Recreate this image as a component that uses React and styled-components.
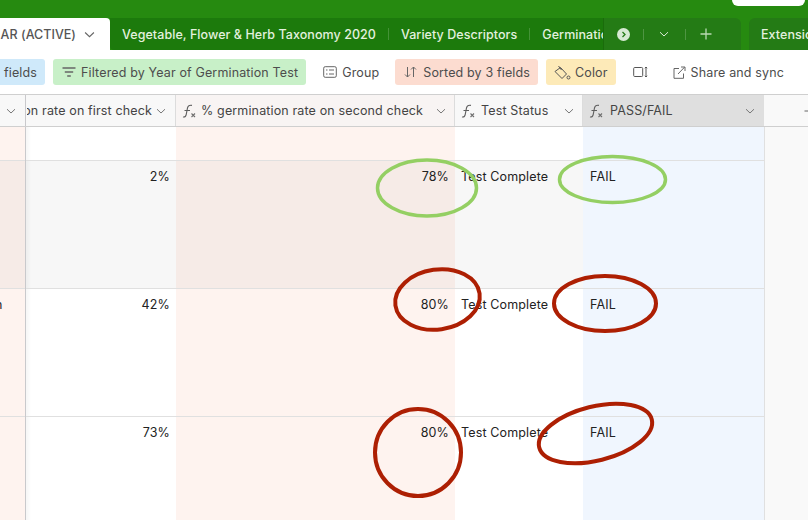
import React from "react";
import styled, { createGlobalStyle } from "styled-components";

const Global = createGlobalStyle`
  html, body { margin: 0; padding: 0; background: #fff; }
  body { width: 808px; height: 520px; overflow: hidden; font-family: Inter, "Liberation Sans", sans-serif; }
  #root { width: 808px; height: 520px; }
`;

const Page = styled.div`
  position: relative;
  width: 808px;
  height: 520px;
  overflow: hidden;
  display: flex;
  flex-direction: column;
  background: #fff;
`;

/* ---------- green header ---------- */
const Header = styled.div`
  height: 50px;
  flex: none;
  background: #268a10;
  display: flex;
  flex-direction: column;
  position: relative;
`;
const TopBar = styled.div`
  height: 18px;
  flex: none;
  display: flex;
  justify-content: flex-end;
  padding-right: 3px;
`;
const TopPill = styled.div`
  width: 73px;
  height: 6px;
  background: #fff;
  border-radius: 0 0 12px 12px;
`;
const TabRow = styled.div`
  height: 32px;
  display: flex;
  align-items: stretch;
  overflow: hidden;
`;
const ActiveTab = styled.div`
  width: 110px;
  flex: none;
  background: #fff;
  border-radius: 0 4px 0 0;
  display: flex;
  align-items: center;
  justify-content: flex-end;
  gap: 8px;
  padding-right: 15px;
  box-sizing: border-box;
  font-size: 12.5px;
  font-weight: 500;
  letter-spacing: 0.03px;
  color: #555;
  white-space: nowrap;
`;
const TabStrip = styled.div`
  width: 493px;
  flex: none;
  background: #1c7a0c;
  border-radius: 0 0 0 4px;
  display: flex;
  align-items: center;
  overflow: hidden;
  padding-left: 12px;
  box-sizing: border-box;
`;
const TabLabel = styled.span`
  font-size: 12.5px;
  font-weight: 500;
  letter-spacing: 0.06px;
  color: #e3f1df;
  white-space: nowrap;
  flex: none;
`;
const TabSep = styled.span`
  width: 1px;
  height: 12px;
  margin: 0 12px;
  flex: none;
  background: rgba(255, 255, 255, 0.18);
`;
const TabControls = styled.div`
  width: 138px;
  flex: none;
  background: #247b15;
  border-left: 1px solid #1a6c0b;
  border-radius: 0 6px 0 0;
  box-sizing: border-box;
  display: flex;
  align-items: center;
  color: #dcecd8;
  padding-left: 13px;
`;
const ControlDot = styled.span`
  width: 13px;
  height: 13px;
  border-radius: 50%;
  background: #d7ead3;
  display: flex;
  align-items: center;
  justify-content: center;
  flex: none;
`;
const ControlSep = styled.span`
  width: 1px;
  height: 11px;
  flex: none;
  margin: 0 ${(p) => p.$r}px 0 ${(p) => p.$l}px;
  background: rgba(255, 255, 255, 0.2);
`;
const ExtTab = styled.div`
  flex: 1;
  margin-left: 8px;
  background: #247b15;
  border-radius: 6px 0 0 0;
  padding-left: 12px;
  display: flex;
  align-items: center;
  overflow: hidden;
`;

/* ---------- toolbar ---------- */
const Toolbar = styled.div`
  height: 44px;
  flex: none;
  display: flex;
  align-items: center;
  box-sizing: border-box;
`;
const Tool = styled.div`
  height: 26px;
  box-sizing: border-box;
  display: flex;
  align-items: center;
  flex: none;
  gap: ${(p) => p.$gap ?? 5}px;
  margin-right: ${(p) => p.$mr ?? 8}px;
  padding: 0 ${(p) => p.$pr ?? 8}px 0 ${(p) => p.$pl ?? 8}px;
  border-radius: ${(p) => (p.$flushLeft ? "0 3px 3px 0" : "3px")};
  background: ${(p) => p.$bg || "transparent"};
  font-size: 12.5px;
  letter-spacing: 0.14px;
  color: #4d4d4d;
  white-space: nowrap;
`;

/* ---------- grid ---------- */
const Grid = styled.div`
  flex: 1;
  display: flex;
  flex-direction: column;
  min-height: 0;
`;
const Columns = "25px 1px 150px 279px 128px 181px 44px";
const HeadRow = styled.div`
  display: grid;
  grid-template-columns: ${Columns};
  height: 33px;
  flex: none;
  box-sizing: border-box;
  border-top: 1px solid #cfcfcf;
  border-bottom: 1px solid #cfcfcf;
`;
const Row = styled.div`
  display: grid;
  grid-template-columns: ${Columns};
  height: ${(p) => p.$h}px;
  flex: none;
`;
const HeadCell = styled.div`
  display: flex;
  align-items: center;
  box-sizing: border-box;
  min-width: 0;
  overflow: hidden;
  background: ${(p) => p.$bg || "#f8f8f8"};
  border-right: ${(p) => (p.$nb ? "0" : "1px solid #dcdcdc")};
  padding: 0 ${(p) => p.$pr ?? 8}px 0 ${(p) => p.$pl ?? 6}px;
  font-size: 12.5px;
  letter-spacing: 0.14px;
  color: #444;
  white-space: nowrap;
`;
const HeadText = styled.span`
  flex: 1;
  margin-left: ${(p) => p.$ml ?? 0}px;
  min-width: 0;
  white-space: nowrap;
  overflow: hidden;
  direction: ${(p) => (p.$clipStart ? "rtl" : "ltr")};
`;
const Divider = styled.div`
  background: #c9c9cc;
`;
const Cell = styled.div`
  background: ${(p) => p.$bg};
  box-sizing: border-box;
  min-width: 0;
  padding: 8px 6px 0 ${(p) => p.$pl ?? 6}px;
  font-size: 12.5px;
  letter-spacing: 0.14px;
  line-height: 16px;
  color: #222;
  text-align: ${(p) => (p.$right ? "right" : "left")};
  white-space: nowrap;
  overflow: hidden;
  border-bottom: ${(p) => (p.$line ? "1px solid #e0e0e0" : "0")};
  box-shadow: ${(p) => (p.$shade ? "inset 5px 0 3px -2px rgba(0,0,0,0.035)" : "none")};
`;
const LeadCell = styled(Cell)`
  padding-left: 0;
  padding-right: 0;
  text-indent: -5px;
`;
const EmptyCell = styled.div`
  background: #f9f9f9;
  border-left: 1px solid #e0e0e0;
`;
const Overlay = styled.svg`
  position: absolute;
  left: 0;
  top: 0;
  pointer-events: none;
`;

const Chevron = ({ size = 10, color = "#777" }) => (
  <svg width={size} height={size} viewBox="0 0 10 10" fill="none" style={{ flex: "none" }}>
    <path d="M1 3.200 5 7l4-3.800" stroke={color} strokeWidth="1" />
  </svg>
);

const Fx = () => (
  <svg width="14" height="15" viewBox="0 0 14 15" fill="none" style={{ flex: "none" }}>
    <path d="M1 14c2.200.4 2.800-.5 3.200-2.400l1.300-6.800C5.900 3 7.200 2 10 2.400M2.500 7.500h5.500" stroke="#5f5f5f" strokeWidth="1.100" />
    <path d="M9.500 10.500l3.500 3.500M13 10.500l-3.500 3.500" stroke="#6f6f6f" strokeWidth="1.100" />
  </svg>
);

const FilterIcon = () => (
  <svg width="14" height="12" viewBox="0 0 14 12" fill="none" style={{ flex: "none" }}>
    <path d="M0.500 2h13M2.800 6h8.400M5.200 10h3.600" stroke="#666" strokeWidth="1.300" />
  </svg>
);
const GroupIcon = () => (
  <svg width="14" height="12" viewBox="0 0 14 12" fill="none" style={{ flex: "none" }}>
    <rect x="0.700" y="0.700" width="12.600" height="10.600" rx="1.500" stroke="#666" />
    <path d="M3 4h1.500M6 4h5M3 8h1.500M6 8h5" stroke="#666" />
  </svg>
);
const SortIcon = () => (
  <svg width="13" height="12" viewBox="0 0 13 12" fill="none" style={{ flex: "none" }}>
    <path d="M3.500 1v10M1 8.500 3.500 11 6 8.500M9.500 11V1M7 3.500 9.500 1 12 3.500" stroke="#666" />
  </svg>
);
const BucketIcon = () => (
  <svg width="17" height="15" viewBox="0 0 17 15" fill="none" style={{ flex: "none" }}>
    <path d="M1 6.500 6.500 2.500 12.500 9l-4.500 4.500z" stroke="#555" />
    <path d="M4.500 1 7.500 5" stroke="#555" />
    <circle cx="14.500" cy="12.500" r="1.500" stroke="#555" />
  </svg>
);
const RowHeightIcon = () => (
  <svg width="15" height="12" viewBox="0 0 15 12" fill="none" style={{ flex: "none" }}>
    <rect x="0.700" y="1.500" width="9" height="9" rx="1" stroke="#555" />
    <path d="M13 1v10M11.800 2.200 13 1l1.200 1.200M11.800 9.800 13 11l1.200-1.200" stroke="#555" />
  </svg>
);
const ShareIcon = () => (
  <svg width="13" height="13" viewBox="0 0 13 13" fill="none" style={{ flex: "none" }}>
    <path d="M6 2.500H1v9.800h9.500V7.500" stroke="#666" />
    <path d="M5 8l6.500-6.800M8 1h4v4" stroke="#666" />
  </svg>
);

const rowColors = {
  plain: ["#fef3ef", "#ffffff", "#fef3ef", "#ffffff", "#f0f6fe"],
  hover: ["#f6ebe7", "#f7f7f7", "#f6ebe7", "#f7f7f7", "#f0f6fe"],
};

const rows = [
  { h: 34, kind: "plain", line: true },
  { h: 128, kind: "hover", line: true, first: "2%", second: "78%", status: "Test Complete", result: "FAIL" },
  { h: 128, kind: "plain", line: true, lead: "n", first: "42%", second: "80%", status: "Test Complete", result: "FAIL" },
  { h: 104, kind: "plain", first: "73%", second: "80%", status: "Test Complete", result: "FAIL" },
];

const GridRow = ({ r }) => {
  const c = rowColors[r.kind];
  return (
    <Row $h={r.h}>
      <LeadCell $bg={c[0]} $line={r.line}>{r.lead}</LeadCell>
      <Divider />
      <Cell $bg={c[1]} $right $shade $line={r.line}>{r.first}</Cell>
      <Cell $bg={c[2]} $right $line={r.line}>{r.second}</Cell>
      <Cell $bg={c[3]} $line={r.line}>{r.status}</Cell>
      <Cell $bg={c[4]} $pl={7} $line={r.line}>{r.result}</Cell>
      <EmptyCell />
    </Row>
  );
};

export default function App() {
  return (
    <Page>
      <Global />
      <Header>
        <TopBar><TopPill /></TopBar>
        <TabRow>
          <ActiveTab>
            <span>AR (ACTIVE)</span>
            <Chevron size={11} color="#666" />
          </ActiveTab>
          <TabStrip>
            <TabLabel>Vegetable, Flower &amp; Herb Taxonomy 2020</TabLabel>
            <TabSep />
            <TabLabel>Variety Descriptors</TabLabel>
            <TabSep />
            <TabLabel>Germination</TabLabel>
          </TabStrip>
          <TabControls>
            <ControlDot>
              <svg width="7" height="7" viewBox="0 0 7 7" fill="none"><path d="M2.500 1 5 3.500 2.500 6" stroke="#247b15" strokeWidth="1.300" /></svg>
            </ControlDot>
            <ControlSep $l={13} $r={15} />
            <Chevron size={10} color="#dcecd8" />
            <ControlSep $l={16} $r={14} />
            <svg width="12" height="12" viewBox="0 0 12 12" fill="none"><path d="M6 .500v11M.500 6h11" stroke="#b9d9b3" strokeWidth="1.300" /></svg>
          </TabControls>
          <ExtTab><TabLabel>Extensions</TabLabel></ExtTab>
        </TabRow>
      </Header>

      <Toolbar>
        <Tool $bg="#cfe9fa" $flushLeft $mr={8} $pl={4} $pr={8}><span>fields</span></Tool>
        <Tool $bg="#c8f0c8" $mr={9} $pl={9} $pr={8}><FilterIcon /><span>Filtered by Year of Germination Test</span></Tool>
        <Tool $mr={8} $pl={8} $pr={8}><GroupIcon /><span>Group</span></Tool>
        <Tool $bg="#fcdcd0" $mr={8} $pl={9} $pr={8} $gap={6}><SortIcon /><span>Sorted by 3 fields</span></Tool>
        <Tool $bg="#fdeab8" $mr={9} $pl={8} $pr={8} $gap={4}><BucketIcon /><span>Color</span></Tool>
        <Tool $mr={9} $pl={8} $pr={8}><RowHeightIcon /></Tool>
        <Tool $pl={8} $gap={5}><ShareIcon /><span>Share and sync</span></Tool>
      </Toolbar>

      <Grid>
        <HeadRow>
          <HeadCell $nb $pr={0} $pl={6}><Chevron /></HeadCell>
          <Divider />
          <HeadCell $pl={0} $pr={9}>
            <HeadText $clipStart $ml={1}>on rate on first check</HeadText>
            <span style={{ width: 4 }} />
            <Chevron />
          </HeadCell>
          <HeadCell $bg="#f8f4f3">
            <Fx />
            <HeadText $ml={5}>% germination rate on second check</HeadText>
            <Chevron />
          </HeadCell>
          <HeadCell>
            <Fx />
            <HeadText $ml={6}>Test Status</HeadText>
            <Chevron />
          </HeadCell>
          <HeadCell $bg="#dfdfdf" $nb $pr={9}>
            <Fx />
            <HeadText $ml={7}>PASS/FAIL</HeadText>
            <Chevron />
          </HeadCell>
          <HeadCell $bg="#f9f9f9" $nb $pl={40} $pr={0}>
            <svg width="12" height="12" viewBox="0 0 12 12" fill="none" style={{ flex: "none" }}><path d="M6 .500v11M.500 6h11" stroke="#666" /></svg>
          </HeadCell>
        </HeadRow>
        {rows.map((r, i) => <GridRow key={i} r={r} />)}
      </Grid>

      <Overlay width="808" height="520" viewBox="0 0 808 520" fill="none">
        <ellipse cx="427" cy="188" rx="49.500" ry="28" stroke="#94cf63" strokeWidth="3.500" />
        <ellipse cx="612.500" cy="179.500" rx="53" ry="23" stroke="#94cf63" strokeWidth="3.500" />
        <ellipse cx="437.500" cy="299.500" rx="42.500" ry="30" stroke="#ad1f03" strokeWidth="4" transform="rotate(-8 437.500 299.500)" />
        <ellipse cx="605" cy="303.500" rx="51" ry="27.500" stroke="#ad1f03" strokeWidth="4" />
        <ellipse cx="418" cy="452.500" rx="43" ry="43.500" stroke="#ad1f03" strokeWidth="4" />
        <ellipse cx="595.500" cy="433.500" rx="58" ry="27" stroke="#ad1f03" strokeWidth="4" transform="rotate(-14 595.500 433.500)" />
      </Overlay>
    </Page>
  );
}
